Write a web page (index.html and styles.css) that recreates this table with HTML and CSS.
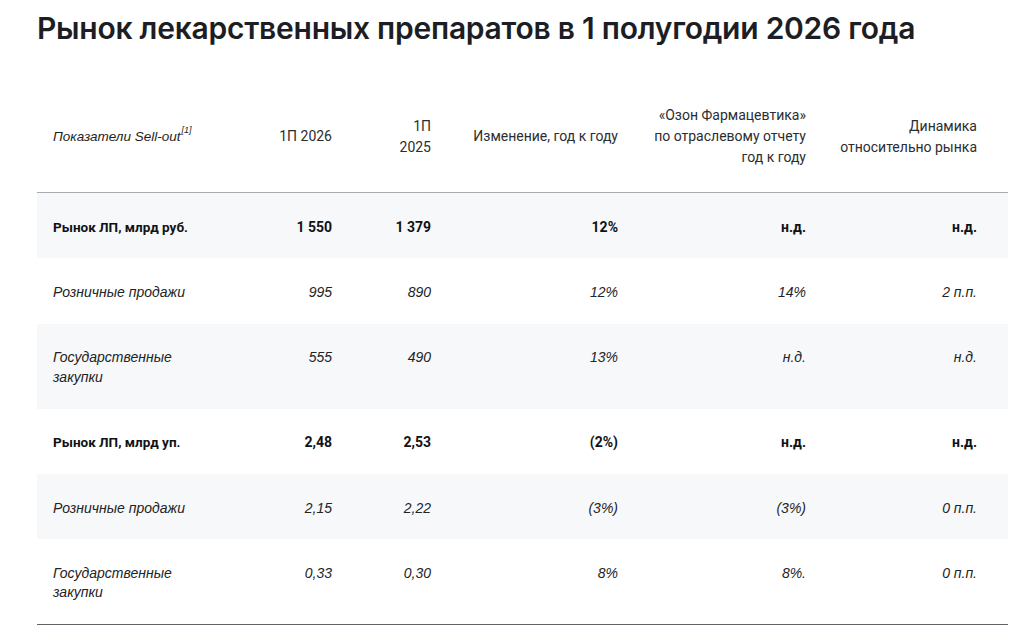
FILE: index.html
```html
<!DOCTYPE html>
<html lang="ru">
<head>
<meta charset="utf-8">
<title>Рынок лекарственных препаратов</title>
<link rel="stylesheet" href="styles.css">
</head>
<body>
<main class="page">
  <h1 class="title">Рынок лекарственных препаратов в 1 полугодии 2026 года</h1>
  <table class="data">
    <colgroup>
      <col class="c1"><col class="c2"><col class="c3"><col class="c4"><col class="c5"><col class="c6">
    </colgroup>
    <thead>
      <tr>
        <th class="label">Показатели Sell-out<sup>[1]</sup></th>
        <th>1П 2026</th>
        <th>1П<br>2025</th>
        <th>Изменение, год к году</th>
        <th>«Озон Фармацевтика» по отраслевому отчету год к году</th>
        <th>Динамика относительно рынка</th>
      </tr>
    </thead>
    <tbody>
      <tr class="main">
        <td class="label">Рынок ЛП, млрд руб.</td>
        <td>1 550</td><td>1 379</td><td>12%</td><td>н.д.</td><td>н.д.</td>
      </tr>
      <tr class="sub">
        <td class="label">Розничные продажи</td>
        <td>995</td><td>890</td><td>12%</td><td>14%</td><td>2 п.п.</td>
      </tr>
      <tr class="sub">
        <td class="label">Государственные закупки</td>
        <td>555</td><td>490</td><td>13%</td><td>н.д.</td><td>н.д.</td>
      </tr>
      <tr class="main">
        <td class="label">Рынок ЛП, млрд уп.</td>
        <td>2,48</td><td>2,53</td><td>(2%)</td><td>н.д.</td><td>н.д.</td>
      </tr>
      <tr class="sub">
        <td class="label">Розничные продажи</td>
        <td>2,15</td><td>2,22</td><td>(3%)</td><td>(3%)</td><td>0 п.п.</td>
      </tr>
      <tr class="sub">
        <td class="label">Государственные закупки</td>
        <td>0,33</td><td>0,30</td><td>8%</td><td>8%.</td><td>0 п.п.</td>
      </tr>
    </tbody>
  </table>
</main>
</body>
</html>
```
FILE: styles.css
```css
html, body {
  margin: 0;
  padding: 0;
  background: #ffffff;
}

.page {
  padding: 8px 25px 0 37px;
}

.title {
  margin: 0 0 34px 0;
  font-family: Inter, "Noto Sans", sans-serif;
  font-weight: 600;
  font-size: 30px;
  line-height: 40px;
  color: #1c1e24;
  letter-spacing: -0.25px;
}

.data {
  width: 971px;
  border-collapse: collapse;
  table-layout: fixed;
  color: #1d1d1f;
}

.c1 { width: 180px; }
.c2 { width: 131px; }
.c3 { width: 99px; }
.c4 { width: 187px; }
.c5 { width: 188px; }
.c6 { width: 186px; }

.data th {
  font-family: Roboto, "Liberation Sans", sans-serif;
  font-weight: 400;
  font-size: 14px;
  line-height: 21px;
  color: #2b2d31;
  text-align: right;
  padding: 23px 16px 24px 16px;
  border-bottom: 1px solid #a9acb1;
  vertical-align: middle;
}

.data th:last-child,
.data td:last-child {
  padding-right: 31px;
}

.data th.label {
  text-align: left;
  font-family: "Liberation Sans", Arial, sans-serif;
  font-style: italic;
  font-size: 13.5px;
  color: #1d1e21;
}

.data th.label sup {
  font-size: 9px;
  line-height: 0;
  vertical-align: 8px;
  margin-left: 1px;
}

.data td {
  font-family: "Liberation Sans", Arial, sans-serif;
  font-size: 14px;
  line-height: 19.4px;
  padding: 24.5px 16px 21.5px 16px;
  text-align: right;
  vertical-align: top;
}

.data td.label {
  text-align: left;
}

.data tbody tr:nth-child(odd) {
  background: #f6f8fa;
}

.data tr.main td {
  font-family: Roboto, "Liberation Sans", sans-serif;
  font-weight: 700;
  color: #111214;
}

.data tr.main td.label {
  font-size: 13.5px;
}

.data tr.sub td {
  font-style: italic;
  color: #222326;
}

.data tbody tr:last-child td {
  border-bottom: 1px solid #5f6368;
}
```
